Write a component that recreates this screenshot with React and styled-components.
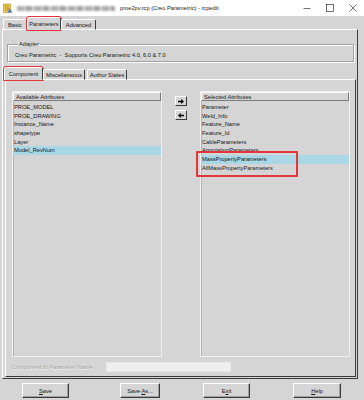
import React from "react";
import styled, { createGlobalStyle } from "styled-components";

const GlobalStyle = createGlobalStyle`
  html, body {
    margin: 0;
    padding: 0;
    background: #d5d5d5;
  }
  body {
    font-family: "Liberation Sans", Arial, sans-serif;
  }
`;

const RED = "#e0363c";

const Window = styled.div`
  width: 364px;
  height: 400px;
  background: #d5d5d5;
  display: flex;
  flex-direction: column;
  overflow: hidden;
  font-size: 5.7px;
  color: #141414;
`;

//TITLE BAR
const TitleBar = styled.div`
  height: 16px;
  background: #fff;
  display: flex;
  align-items: center;
  padding-left: 3px;
  flex-shrink: 0;
`;

// redacted path, shown smudged as in the screenshot
const Smudge = styled.div`
  width: 98px;
  height: 5px;
  margin: 0 5px 0 4px;
  background: repeating-linear-gradient(
    90deg,
    #9a9a9a 0 7px,
    #c4c4c4 7px 9px,
    #8c8c8c 9px 15px,
    #d8d8d8 15px 17px
  );
  filter: blur(1.2px);
  opacity: 0.8;
`;

const TitleText = styled.span`
  flex: 1;
  white-space: nowrap;
  color: #1a1a1a;
`;

const Controls = styled.div`
  display: flex;
  height: 16px;
`;

const Control = styled.div`
  width: 23px;
  display: flex;
  align-items: center;
  justify-content: center;
`;

//TABS
const Body = styled.div`
  flex: 1;
  display: flex;
  flex-direction: column;
  padding: 1px 6px 0 2px;
`;

const TabStrip = styled.div`
  display: flex;
  align-items: flex-end;
  height: 13px;
  margin-top: ${(p) => p.$mt || 0}px;
  margin-bottom: -1px;
  position: relative;
  z-index: 1;
  flex-shrink: 0;
`;

const Tab = styled.div`
  width: ${(p) => p.$w}px;
  height: ${(p) => (p.$active ? 13 : 11)}px;
  margin: 0 ${(p) => (p.$active ? -1 : 1)}px;
  box-sizing: border-box;
  display: flex;
  align-items: center;
  justify-content: center;
  background: #d5d5d5;
  border-top: 1px solid #fff;
  border-left: 1px solid #fff;
  border-right: 1px solid #3c3c3c;
  border-bottom: ${(p) => (p.$active ? "1px solid #d5d5d5" : "1px solid #fff")};
  border-radius: 2px 2px 0 0;
  white-space: nowrap;
  outline: ${(p) => (p.$mark ? `1.5px solid ${RED}` : "none")};
  outline-offset: -0.5px;
`;

const OuterPanel = styled.div`
  height: 350px;
  box-sizing: border-box;
  border-top: 1px solid #fff;
  border-left: 1px solid #fff;
  border-right: 1px solid #3a3a3a;
  border-bottom: 1px solid #3a3a3a;
  padding: 11px 1px 1px 2px;
  display: flex;
  flex-direction: column;
`;

//ADAPTER GROUP
const Group = styled.fieldset`
  margin: 0 2px;
  padding: 5px 7px 3px;
  border: 1px solid #a2a2a2;
  box-shadow: 1px 1px 0 #fff, inset 1px 1px 0 #fff;
  min-width: 0;
`;

const Legend = styled.legend`
  padding: 0 1px;
  margin-left: 3px;
  line-height: 6px;
`;

const GroupText = styled.div`
  line-height: 6px;
  white-space: pre;
`;

const InnerPanel = styled.div`
  flex: 1;
  box-sizing: border-box;
  border-top: 1px solid #fff;
  border-left: 1px solid #fff;
  border-right: 1px solid #3a3a3a;
  border-bottom: 1px solid #3a3a3a;
  padding: 11px 5px 4px 6px;
  display: flex;
  flex-direction: column;
`;

const ListsArea = styled.div`
  flex: 1;
  display: grid;
  grid-template-columns: 150px 1fr 150px;
`;

const ListBox = styled.div`
  position: relative;
  box-sizing: border-box;
  border: 1px solid #efefef;
  box-shadow: inset 1px 1px 0 #b4b4b4;
  display: flex;
  flex-direction: column;
`;

const ListHeader = styled.div`
  height: 9px;
  box-sizing: border-box;
  border-top: 1px solid #fff;
  border-left: 1px solid #fff;
  border-right: 1px solid #7a7a7a;
  border-bottom: 1px solid #7a7a7a;
  display: flex;
  align-items: center;
  padding-left: 2px;
  margin-bottom: 2px;
`;

const Row = styled.div`
  height: 8.67px;
  line-height: 8.67px;
  padding-left: 1px;
  white-space: nowrap;
  background: ${(p) => (p.$selected ? "#a9d7e6" : "transparent")};
`;

const MarkBox = styled.div`
  position: absolute;
  left: -5px;
  top: 59px;
  width: 102px;
  height: 26px;
  box-sizing: border-box;
  border: 2px solid ${RED};
  border-radius: 1px;
  pointer-events: none;
`;

const Mover = styled.div`
  display: flex;
  flex-direction: column;
  align-items: center;
  padding-top: 5px;
  gap: 4px;
`;

const SmallButton = styled.div`
  width: 12px;
  height: 10px;
  box-sizing: border-box;
  border-top: 1px solid #fff;
  border-left: 1px solid #fff;
  border-right: 1px solid #3a3a3a;
  border-bottom: 1px solid #3a3a3a;
  display: flex;
  align-items: center;
  justify-content: center;
`;

const IdRow = styled.div`
  display: flex;
  align-items: center;
  height: 10px;
  margin-top: 5px;
`;

const IdLabel = styled.span`
  width: 94px;
  color: #a3a3a3;
  text-shadow: 0.5px 0.5px 0 #f4f4f4;
  white-space: nowrap;
`;

const IdInput = styled.div`
  width: 125px;
  height: 10px;
  box-sizing: border-box;
  background: #efefef;
  border: 1px solid #e6e6e6;
`;

//BUTTONS
const ButtonRow = styled.div`
  display: flex;
  padding-top: 4px;
`;

const Button = styled.div`
  width: ${(p) => p.$w}px;
  height: 15px;
  margin-left: ${(p) => p.$ml}px;
  box-sizing: border-box;
  border-top: 1px solid #fff;
  border-left: 1px solid #fff;
  border-right: 1px solid #3a3a3a;
  border-bottom: 1px solid #3a3a3a;
  box-shadow: inset -1px -1px 0 #a0a0a0;
  display: flex;
  align-items: center;
  justify-content: center;
  white-space: nowrap;

  u {
    text-decoration-thickness: 0.5px;
    text-underline-offset: 1px;
  }
`;

const AppIcon = () => (
  <svg width="10" height="10" viewBox="0 0 10 10">
    <rect x="0.5" y="1" width="7" height="8.5" fill="#f2c94c" stroke="#b98a12" strokeWidth="0.6" />
    <path d="M2 3h4M2 5h4M2 7h3" stroke="#8a6a10" strokeWidth="0.6" />
    <path d="M6 5l3.5 4.5H5z" fill="#3f7fd0" />
  </svg>
);

const Arrow = ({ left }) => (
  <svg width="6" height="5" viewBox="0 0 6 5" style={{ transform: left ? "scaleX(-1)" : "none" }}>
    <path d="M0 1.8h3.2V0L6 2.5 3.2 5V3.2H0z" fill="#000" />
  </svg>
);

const available = ["PROE_MODEL", "PROE_DRAWING", "Instance_Name", "shapetype", "Layer", "Model_RevNum"];
const selected = [
  "Parameter",
  "Weld_Info",
  "Feature_Name",
  "Feature_Id",
  "CableParameters",
  "AnnotationParameters",
  "MassPropertyParameters",
  "AllMassPropertyParameters",
];

export default function App() {
  return (
    <>
      <GlobalStyle />
      <Window>
        <TitleBar>
          <AppIcon />
          <Smudge />
          <TitleText>proe2pv.rcp (Creo Parametric) - rcpedit</TitleText>
          <Controls>
            <Control>
              <svg width="8" height="8" viewBox="0 0 8 8">
                <path d="M0.5 4.5h7" stroke="#333" strokeWidth="0.7" />
              </svg>
            </Control>
            <Control>
              <svg width="8" height="8" viewBox="0 0 8 8">
                <rect x="0.5" y="0.5" width="7" height="7" fill="none" stroke="#333" strokeWidth="0.7" />
              </svg>
            </Control>
            <Control>
              <svg width="8" height="8" viewBox="0 0 8 8">
                <path d="M0.5 0.5l7 7M7.5 0.5l-7 7" stroke="#333" strokeWidth="0.7" />
              </svg>
            </Control>
          </Controls>
        </TitleBar>

        <Body>
          <TabStrip>
            <Tab $w={24}>Basic</Tab>
            <Tab $w={34} $active $mark>Parameters</Tab>
            <Tab $w={35}>Advanced</Tab>
          </TabStrip>
          <OuterPanel>
            <Group>
              <Legend>Adapter</Legend>
              <GroupText>Creo Parametric  -  Supports Creo Parametric 4.0, 6.0 &amp; 7.0</GroupText>
            </Group>

            <TabStrip $mt={5}>
              <Tab $w={39} $active $mark>Component</Tab>
              <Tab $w={42}>Miscellaneous</Tab>
              <Tab $w={40}>Author States</Tab>
            </TabStrip>
            <InnerPanel>
              <ListsArea>
                <ListBox>
                  <ListHeader>Available Attributes</ListHeader>
                  {available.map((a) => (
                    <Row key={a} $selected={a === "Model_RevNum"}>{a}</Row>
                  ))}
                </ListBox>
                <Mover>
                  <SmallButton><Arrow /></SmallButton>
                  <SmallButton><Arrow left /></SmallButton>
                </Mover>
                <ListBox>
                  <ListHeader>Selected Attributes</ListHeader>
                  {selected.map((a) => (
                    <Row key={a} $selected={a === "MassPropertyParameters"}>{a}</Row>
                  ))}
                  <MarkBox />
                </ListBox>
              </ListsArea>
              <IdRow>
                <IdLabel>Component Id Parameter Name</IdLabel>
                <IdInput />
              </IdRow>
            </InnerPanel>
          </OuterPanel>
          <ButtonRow>
            <Button $w={47} $ml={20}><span><u>S</u>ave</span></Button>
            <Button $w={40} $ml={51}><span>Save <u>A</u>s...</span></Button>
            <Button $w={47} $ml={43}><span>E<u>x</u>it</span></Button>
            <Button $w={48} $ml={43}><span><u>H</u>elp</span></Button>
          </ButtonRow>
        </Body>
      </Window>
    </>
  );
}
